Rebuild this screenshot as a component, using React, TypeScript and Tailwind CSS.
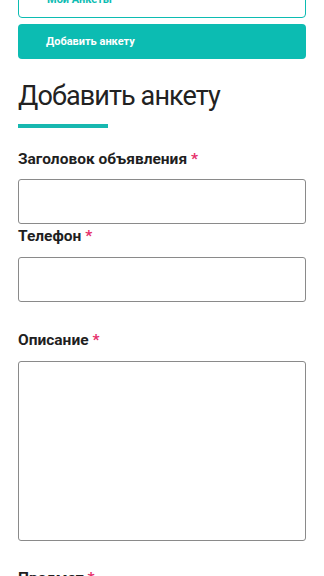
import React from "react";

function Label({ text }: { text: string }) {
  return (
    <div className="text-[15.5px] font-bold leading-[20px] text-[#1f1f1f]">
      {text} <span className="text-[#e6306b]">*</span>
    </div>
  );
}

export default function App() {
  return (
    <div className="bg-white min-h-[576px] overflow-hidden font-['Roboto',sans-serif] px-[18px]">
      <div className="-mt-[18px] h-[36px] rounded-[4px] border border-[#0cbcb2] flex items-center pl-[28px] text-[11px] font-bold text-[#0cbcb2]">
        Мои Анкеты
      </div>
      <div className="mt-[6px] h-[35px] rounded-[4px] bg-[#0cbcb2] flex items-center pl-[28px] text-[11px] font-bold text-white">
        <span className="translate-y-[1px]">Добавить анкету</span>
      </div>
      <h1 className="mt-[19px] text-[27px] leading-[36px] tracking-[-0.9px] font-normal text-[#222]">Добавить анкету</h1>
      <div className="mt-[10px] w-[90px] h-[4px] bg-[#17b8b0]" />
      <div className="mt-[21px]">
        <Label text="Заголовок объявления" />
      </div>
      <div className="mt-[10px] h-[45px] rounded-[3px] border border-[#8a8a8a]" />
      <div className="mt-[2px]">
        <Label text="Телефон" />
      </div>
      <div className="mt-[11px] h-[45px] rounded-[3px] border border-[#8a8a8a]" />
      <div className="mt-[28px]">
        <Label text="Описание" />
      </div>
      <div className="mt-[11px] h-[180px] rounded-[3px] border border-[#8a8a8a]" />
      <div className="mt-[27px]">
        <Label text="Предмет" />
      </div>
    </div>
  );
}
